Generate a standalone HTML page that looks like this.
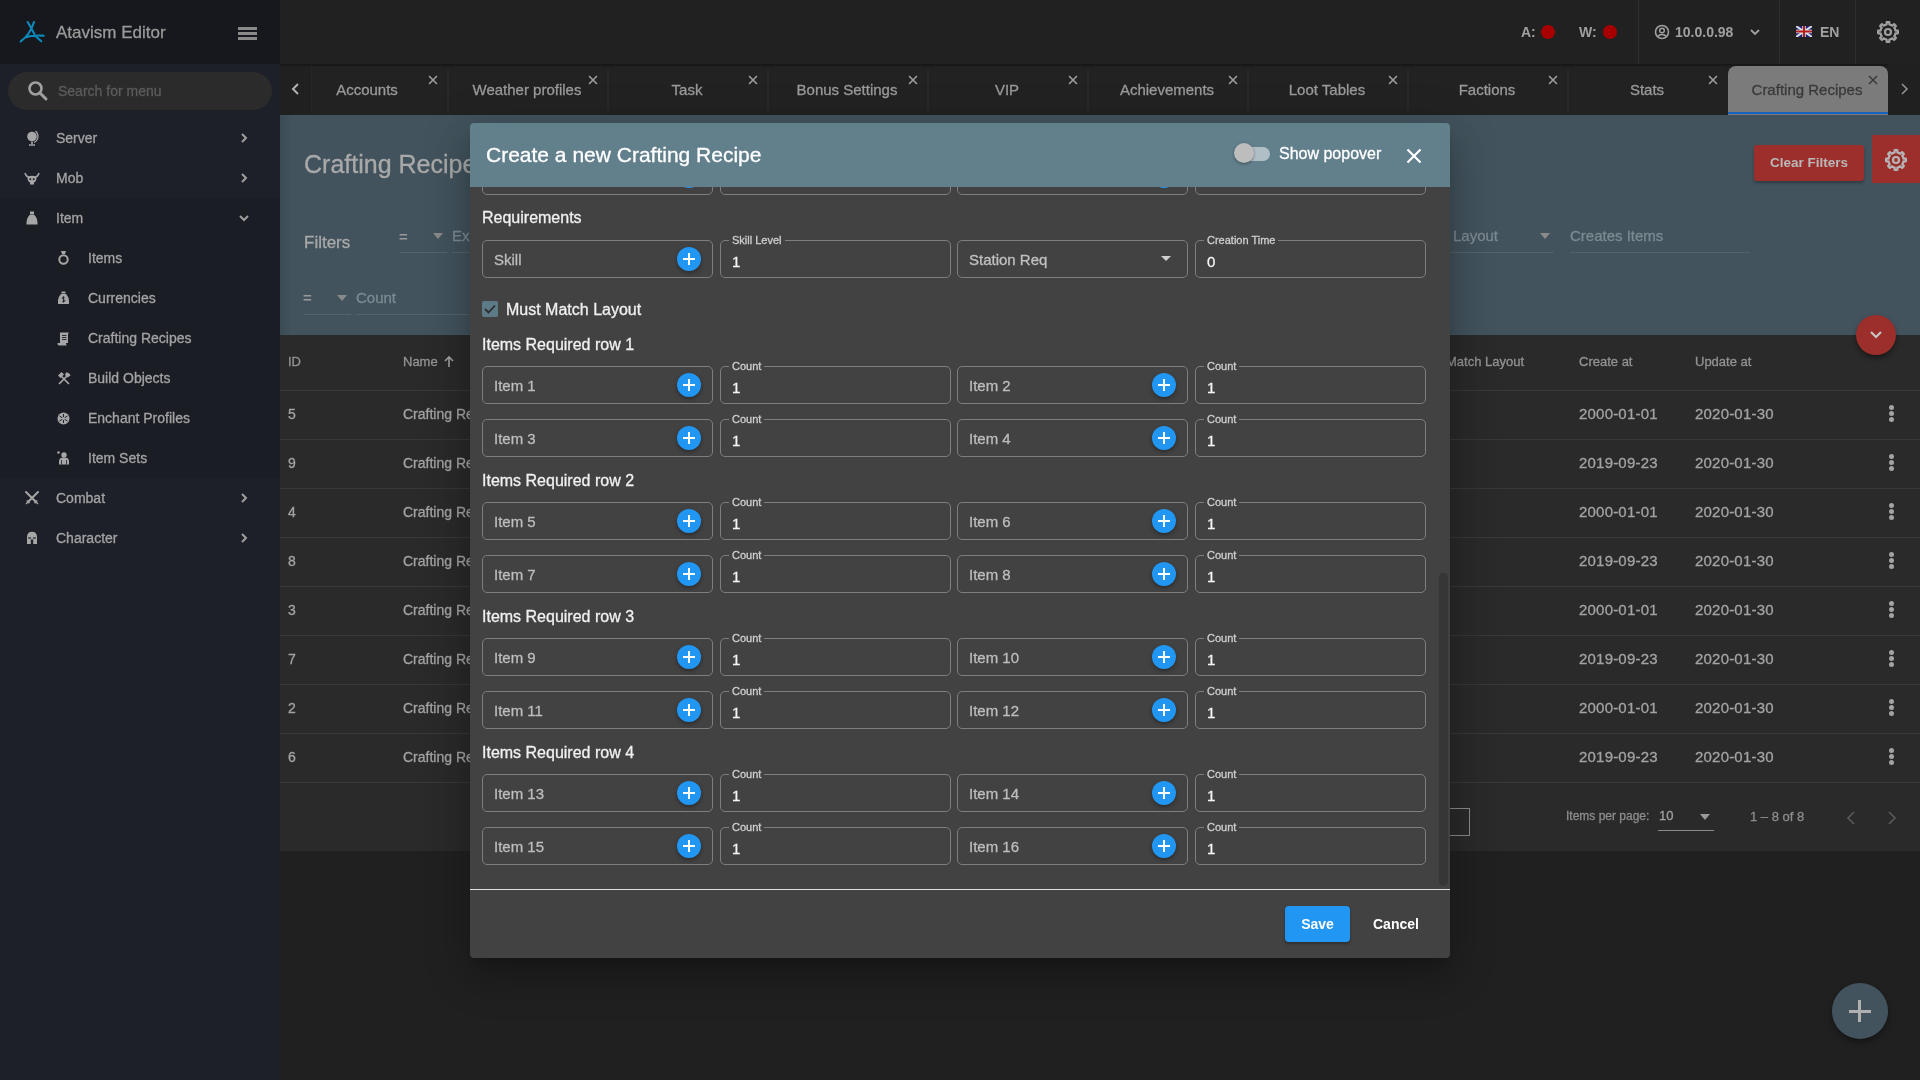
<!DOCTYPE html><html><head><meta charset="utf-8"><style>
*{box-sizing:border-box;margin:0;padding:0}
html,body{width:1920px;height:1080px;overflow:hidden;background:#202020;font-family:"Liberation Sans",sans-serif}
.a{position:absolute}
.t{position:absolute;white-space:nowrap;line-height:1;-webkit-text-stroke:0.3px}
#root{position:absolute;left:0;top:0;width:1920px;height:1080px;will-change:transform}
</style></head><body><div id="root"><div class="a" style="left:0;top:0;width:280px;height:64px;background:#17181d"></div>
<div class="a" style="left:0;top:64px;width:280px;height:1016px;background:#1d2029"></div>
<div class="a" style="left:0;top:198px;width:280px;height:280px;background:#1b1d24"></div>
<svg class="a" style="left:14px;top:14px" width="40" height="36" viewBox="0 0 40 36">
<path d="M13.7 8 L20.3 19.7 M20 8 C17.5 16 13 23 6.7 27.3 M12.3 23.2 C18 21 24 21.5 29.7 21.7 M20.5 21.3 L27.3 27.3" stroke="#0c8abc" stroke-width="2.1" fill="none" stroke-linecap="round"/></svg>
<div class="t" style="left:56px;top:24px;font-size:17px;color:#9a9a9a">Atavism Editor</div>
<div class="a" style="left:238px;top:27px;width:19px;height:3px;background:#8a8a8a"></div>
<div class="a" style="left:238px;top:32px;width:19px;height:3px;background:#8a8a8a"></div>
<div class="a" style="left:238px;top:37px;width:19px;height:3px;background:#8a8a8a"></div>
<div class="a" style="left:8px;top:72px;width:264px;height:38px;border-radius:19px;background:#2b2b2b"></div>
<svg class="a" style="left:27px;top:80px" width="22" height="22" viewBox="0 0 22 22"><circle cx="8.5" cy="8.5" r="6" stroke="#a0a0a0" stroke-width="2.6" fill="none"/><path d="M13 13 L19 19" stroke="#a0a0a0" stroke-width="3" stroke-linecap="round"/></svg>
<div class="t" style="left:58px;top:84px;font-size:14px;color:#5c5c5c">Search for menu</div>
<div class="t" style="left:56px;top:131px;font-size:14px;color:#a3a3a3">Server</div>
<svg class="a" style="left:26px;top:130px" width="14" height="16" viewBox="0 0 14 16"><circle cx="6" cy="6.5" r="4.8" fill="#a6a6a6"/><path d="M9.5 1 C13 4 13 10 8 12.5" stroke="#a6a6a6" stroke-width="1.2" fill="none"/><path d="M6 11.5 V14 M3 15 H9" stroke="#a6a6a6" stroke-width="1.6"/></svg>
<svg class="a" style="left:239px;top:132px" width="10" height="12" viewBox="0 0 10 12"><path d="M3 2 L7 6 L3 10" stroke="#9e9e9e" stroke-width="2" fill="none"/></svg>
<div class="t" style="left:56px;top:171px;font-size:14px;color:#a3a3a3">Mob</div>
<svg class="a" style="left:24px;top:172px" width="16" height="14" viewBox="0 0 16 14"><path d="M1 1 C2 4 4 5 5 5 M15 1 C14 4 12 5 11 5" stroke="#a6a6a6" stroke-width="1.6" fill="none"/><path d="M3.5 6 C3.5 3 12.5 3 12.5 6 C12.5 9 11 10 10 10.5 L10 12.5 L6 12.5 L6 10.5 C5 10 3.5 9 3.5 6Z" fill="#a6a6a6"/><circle cx="6.3" cy="7.2" r="1" fill="#1d2029"/><circle cx="9.7" cy="7.2" r="1" fill="#1d2029"/></svg>
<svg class="a" style="left:239px;top:172px" width="10" height="12" viewBox="0 0 10 12"><path d="M3 2 L7 6 L3 10" stroke="#9e9e9e" stroke-width="2" fill="none"/></svg>
<div class="t" style="left:56px;top:211px;font-size:14px;color:#a3a3a3">Item</div>
<svg class="a" style="left:26px;top:211px" width="12" height="14" viewBox="0 0 12 14"><rect x="4" y="0.5" width="4" height="2.5" fill="#a6a6a6"/><path d="M4 3.5 L8 3.5 C10.5 6 11.5 9 11.5 12 L11.5 13.5 L0.5 13.5 L0.5 12 C0.5 9 1.5 6 4 3.5Z" fill="#a6a6a6"/></svg>
<svg class="a" style="left:238px;top:213px" width="12" height="10" viewBox="0 0 12 10"><path d="M2 3 L6 7 L10 3" stroke="#9e9e9e" stroke-width="2" fill="none"/></svg>
<div class="t" style="left:88px;top:251px;font-size:14px;color:#a3a3a3">Items</div>
<svg class="a" style="left:57px;top:250px" width="13" height="16" viewBox="0 0 13 16"><circle cx="6.5" cy="9.5" r="4.2" stroke="#a6a6a6" stroke-width="2" fill="none"/><path d="M4 1 H9 L8 4 H5Z" fill="#a6a6a6"/></svg>
<div class="t" style="left:88px;top:291px;font-size:14px;color:#a3a3a3">Currencies</div>
<svg class="a" style="left:57px;top:291px" width="13" height="14" viewBox="0 0 13 14"><rect x="4.5" y="0.5" width="4" height="2" fill="#a6a6a6"/><path d="M4 3 L9 3 C11.5 5.5 12 8 12 10.5 L12 13 L1 13 L1 10.5 C1 8 1.5 5.5 4 3Z" fill="#a6a6a6"/><path d="M7.7 6.5 C6.5 5.8 5 6.2 5.2 7.4 C5.4 8.4 8 8.3 8 9.6 C8 10.8 6.3 11 5.2 10.3 M6.5 5.3 V11.5" stroke="#1d2029" stroke-width="0.9" fill="none"/></svg>
<div class="t" style="left:88px;top:331px;font-size:14px;color:#a3a3a3">Crafting Recipes</div>
<svg class="a" style="left:57px;top:332px" width="13" height="14" viewBox="0 0 13 14"><path d="M3 0.5 H12 L11 2 V11 H3Z" fill="#a6a6a6"/><path d="M0.5 11 H9 C9 12 9.5 13.5 10 13.5 H2 C1 13.5 0.5 12.5 0.5 11Z" fill="#a6a6a6"/><path d="M5 3.5 H9.5 M5 5.5 H9.5 M5 7.5 H9.5" stroke="#1d2029" stroke-width="0.9"/></svg>
<div class="t" style="left:88px;top:371px;font-size:14px;color:#a3a3a3">Build Objects</div>
<svg class="a" style="left:57px;top:371px" width="14" height="14" viewBox="0 0 14 14"><path d="M2 13 L11 4 M12 13 L3 4" stroke="#a6a6a6" stroke-width="1.7"/><path d="M1 4.5 L4.5 1 L7 3.5 L3.5 7Z" fill="#a6a6a6"/><path d="M9 1.5 C11 1 13 2.5 13.5 4.5 L10.5 6.5 L8 4Z" fill="#a6a6a6"/></svg>
<div class="t" style="left:88px;top:411px;font-size:14px;color:#a3a3a3">Enchant Profiles</div>
<svg class="a" style="left:57px;top:412px" width="13" height="13" viewBox="0 0 13 13"><circle cx="6.5" cy="6.5" r="6" fill="#a6a6a6"/><path d="M6.5 2 V11 M2.5 4 L10.5 9 M10.5 4 L2.5 9" stroke="#1d2029" stroke-width="1"/><circle cx="6.5" cy="6.5" r="1.6" fill="#a6a6a6"/></svg>
<div class="t" style="left:88px;top:451px;font-size:14px;color:#a3a3a3">Item Sets</div>
<svg class="a" style="left:56px;top:450px" width="15" height="16" viewBox="0 0 15 16"><circle cx="2.5" cy="2.5" r="1.3" fill="#a6a6a6"/><circle cx="8" cy="5" r="2.7" fill="#a6a6a6"/><path d="M3 14.5 V11 C3 8.5 5 7.5 8 7.5 C11 7.5 13 8.5 13 11 V14.5Z" fill="#a6a6a6"/><path d="M5.5 10 V14.5 M10.5 10 V14.5" stroke="#1d2029" stroke-width="0.8"/></svg>
<div class="t" style="left:56px;top:491px;font-size:14px;color:#a3a3a3">Combat</div>
<svg class="a" style="left:24px;top:490px" width="16" height="16" viewBox="0 0 16 16"><path d="M2 2 L12 12 M14 2 L4 12" stroke="#a6a6a6" stroke-width="2" stroke-linecap="round"/><path d="M2 14 L4.5 11.5 M14 14 L11.5 11.5 M2.8 10.5 L5.5 13.2 M13.2 10.5 L10.5 13.2" stroke="#a6a6a6" stroke-width="1.3"/></svg>
<svg class="a" style="left:239px;top:492px" width="10" height="12" viewBox="0 0 10 12"><path d="M3 2 L7 6 L3 10" stroke="#9e9e9e" stroke-width="2" fill="none"/></svg>
<div class="t" style="left:56px;top:531px;font-size:14px;color:#a3a3a3">Character</div>
<svg class="a" style="left:26px;top:531px" width="12" height="14" viewBox="0 0 12 14"><path d="M1 13 V6 C1 2.5 3 0.8 6 0.8 C9 0.8 11 2.5 11 6 V13 H7.2 V8.5 H4.8 V13Z" fill="#a6a6a6"/><path d="M2.3 6.8 L5 7.2 M9.7 6.8 L7 7.2" stroke="#1d2029" stroke-width="1.2"/></svg>
<svg class="a" style="left:239px;top:532px" width="10" height="12" viewBox="0 0 10 12"><path d="M3 2 L7 6 L3 10" stroke="#9e9e9e" stroke-width="2" fill="none"/></svg>
<div class="a" style="left:280px;top:0;width:1640px;height:64px;background:#212121"></div>
<div class="t" style="left:1521px;top:25px;font-size:14px;color:#a0a0a0;font-weight:bold;-webkit-text-stroke:0">A:</div>
<div class="a" style="left:1541px;top:25px;width:14px;height:14px;border-radius:7px;background:#a80000"></div>
<div class="t" style="left:1579px;top:25px;font-size:14px;color:#a0a0a0;font-weight:bold;-webkit-text-stroke:0">W:</div>
<div class="a" style="left:1603px;top:25px;width:14px;height:14px;border-radius:7px;background:#a80000"></div>
<div class="a" style="left:1638px;top:0;width:1px;height:64px;background:#2e2e2e"></div>
<div class="a" style="left:1779px;top:0;width:1px;height:64px;background:#2e2e2e"></div>
<div class="a" style="left:1855px;top:0;width:1px;height:64px;background:#2e2e2e"></div>
<svg class="a" style="left:1654px;top:24px" width="16" height="16" viewBox="0 0 16 16"><circle cx="8" cy="8" r="6.5" stroke="#a0a0a0" stroke-width="1.6" fill="none"/><circle cx="8" cy="6.5" r="2.3" stroke="#a0a0a0" stroke-width="1.5" fill="none"/><path d="M3.8 12.5 C5.5 9.8 10.5 9.8 12.2 12.5" stroke="#a0a0a0" stroke-width="1.5" fill="none"/></svg>
<div class="t" style="left:1675px;top:25px;font-size:14px;color:#a0a0a0;font-weight:bold;-webkit-text-stroke:0">10.0.0.98</div>
<svg class="a" style="left:1749px;top:27px" width="12" height="10" viewBox="0 0 12 10"><path d="M2 3 L6 7 L10 3" stroke="#a0a0a0" stroke-width="1.8" fill="none"/></svg>
<div class="a" style="left:1796px;top:26px;width:16px;height:11px;background:#1a237e"></div>
<svg class="a" style="left:1796px;top:26px" width="16" height="11" viewBox="0 0 16 11"><path d="M0 0 L16 11 M16 0 L0 11" stroke="#ddd" stroke-width="2"/><path d="M8 0 V11 M0 5.5 H16" stroke="#ddd" stroke-width="3.5"/><path d="M8 0 V11 M0 5.5 H16" stroke="#b71c1c" stroke-width="2"/></svg>
<div class="t" style="left:1820px;top:25px;font-size:14px;color:#a0a0a0;font-weight:bold;-webkit-text-stroke:0">EN</div>
<svg class="a" style="left:1876px;top:20px" width="24" height="24" viewBox="0 0 24 24"><path d="M19.08 9.23 L19.48 10.63 L21.91 10.68 L21.91 13.32 L19.48 13.37 L19.08 14.77 L18.96 15.05 L18.26 16.32 L19.94 18.08 L18.08 19.94 L16.32 18.26 L15.05 18.96 L14.77 19.08 L13.37 19.48 L13.32 21.91 L10.68 21.91 L10.63 19.48 L9.23 19.08 L8.95 18.96 L7.68 18.26 L5.92 19.94 L4.06 18.08 L5.74 16.32 L5.04 15.05 L4.92 14.77 L4.52 13.37 L2.09 13.32 L2.09 10.68 L4.52 10.63 L4.92 9.23 L5.04 8.95 L5.74 7.68 L4.06 5.92 L5.92 4.06 L7.68 5.74 L8.95 5.04 L9.23 4.92 L10.63 4.52 L10.68 2.09 L13.32 2.09 L13.37 4.52 L14.77 4.92 L15.05 5.04 L16.32 5.74 L18.08 4.06 L19.94 5.92 L18.26 7.68 L18.96 8.95Z" fill="none" stroke="#a0a0a0" stroke-width="2.2" stroke-linejoin="round"/><circle cx="12" cy="12" r="3" fill="none" stroke="#a0a0a0" stroke-width="2.2"/></svg>
<div class="a" style="left:280px;top:64px;width:1640px;height:51px;background:#202020"></div>
<div class="a" style="left:288px;top:66px;width:160px;height:49px;background:#222222;border-radius:8px 8px 0 0"></div>
<div class="a" style="left:287px;top:68px;width:2px;height:46px;background:#282828;border-radius:1px"></div>
<div class="t" style="left:287px;top:82px;width:160px;text-align:center;font-size:15px;color:#9a9a9a">Accounts</div>
<svg class="a" style="left:428px;top:75px" width="10" height="10" viewBox="0 0 10 10"><path d="M1 1 L9 9 M9 1 L1 9" stroke="#a0a0a0" stroke-width="1.5"/></svg>
<div class="a" style="left:448px;top:66px;width:160px;height:49px;background:#222222;border-radius:8px 8px 0 0"></div>
<div class="a" style="left:447px;top:68px;width:2px;height:46px;background:#282828;border-radius:1px"></div>
<div class="t" style="left:447px;top:82px;width:160px;text-align:center;font-size:15px;color:#9a9a9a">Weather profiles</div>
<svg class="a" style="left:588px;top:75px" width="10" height="10" viewBox="0 0 10 10"><path d="M1 1 L9 9 M9 1 L1 9" stroke="#a0a0a0" stroke-width="1.5"/></svg>
<div class="a" style="left:608px;top:66px;width:160px;height:49px;background:#222222;border-radius:8px 8px 0 0"></div>
<div class="a" style="left:607px;top:68px;width:2px;height:46px;background:#282828;border-radius:1px"></div>
<div class="t" style="left:607px;top:82px;width:160px;text-align:center;font-size:15px;color:#9a9a9a">Task</div>
<svg class="a" style="left:748px;top:75px" width="10" height="10" viewBox="0 0 10 10"><path d="M1 1 L9 9 M9 1 L1 9" stroke="#a0a0a0" stroke-width="1.5"/></svg>
<div class="a" style="left:768px;top:66px;width:160px;height:49px;background:#222222;border-radius:8px 8px 0 0"></div>
<div class="a" style="left:767px;top:68px;width:2px;height:46px;background:#282828;border-radius:1px"></div>
<div class="t" style="left:767px;top:82px;width:160px;text-align:center;font-size:15px;color:#9a9a9a">Bonus Settings</div>
<svg class="a" style="left:908px;top:75px" width="10" height="10" viewBox="0 0 10 10"><path d="M1 1 L9 9 M9 1 L1 9" stroke="#a0a0a0" stroke-width="1.5"/></svg>
<div class="a" style="left:928px;top:66px;width:160px;height:49px;background:#222222;border-radius:8px 8px 0 0"></div>
<div class="a" style="left:927px;top:68px;width:2px;height:46px;background:#282828;border-radius:1px"></div>
<div class="t" style="left:927px;top:82px;width:160px;text-align:center;font-size:15px;color:#9a9a9a">VIP</div>
<svg class="a" style="left:1068px;top:75px" width="10" height="10" viewBox="0 0 10 10"><path d="M1 1 L9 9 M9 1 L1 9" stroke="#a0a0a0" stroke-width="1.5"/></svg>
<div class="a" style="left:1088px;top:66px;width:160px;height:49px;background:#222222;border-radius:8px 8px 0 0"></div>
<div class="a" style="left:1087px;top:68px;width:2px;height:46px;background:#282828;border-radius:1px"></div>
<div class="t" style="left:1087px;top:82px;width:160px;text-align:center;font-size:15px;color:#9a9a9a">Achievements</div>
<svg class="a" style="left:1228px;top:75px" width="10" height="10" viewBox="0 0 10 10"><path d="M1 1 L9 9 M9 1 L1 9" stroke="#a0a0a0" stroke-width="1.5"/></svg>
<div class="a" style="left:1248px;top:66px;width:160px;height:49px;background:#222222;border-radius:8px 8px 0 0"></div>
<div class="a" style="left:1247px;top:68px;width:2px;height:46px;background:#282828;border-radius:1px"></div>
<div class="t" style="left:1247px;top:82px;width:160px;text-align:center;font-size:15px;color:#9a9a9a">Loot Tables</div>
<svg class="a" style="left:1388px;top:75px" width="10" height="10" viewBox="0 0 10 10"><path d="M1 1 L9 9 M9 1 L1 9" stroke="#a0a0a0" stroke-width="1.5"/></svg>
<div class="a" style="left:1408px;top:66px;width:160px;height:49px;background:#222222;border-radius:8px 8px 0 0"></div>
<div class="a" style="left:1407px;top:68px;width:2px;height:46px;background:#282828;border-radius:1px"></div>
<div class="t" style="left:1407px;top:82px;width:160px;text-align:center;font-size:15px;color:#9a9a9a">Factions</div>
<svg class="a" style="left:1548px;top:75px" width="10" height="10" viewBox="0 0 10 10"><path d="M1 1 L9 9 M9 1 L1 9" stroke="#a0a0a0" stroke-width="1.5"/></svg>
<div class="a" style="left:1568px;top:66px;width:160px;height:49px;background:#222222;border-radius:8px 8px 0 0"></div>
<div class="a" style="left:1567px;top:68px;width:2px;height:46px;background:#282828;border-radius:1px"></div>
<div class="t" style="left:1567px;top:82px;width:160px;text-align:center;font-size:15px;color:#9a9a9a">Stats</div>
<svg class="a" style="left:1708px;top:75px" width="10" height="10" viewBox="0 0 10 10"><path d="M1 1 L9 9 M9 1 L1 9" stroke="#a0a0a0" stroke-width="1.5"/></svg>
<div class="a" style="left:1728px;top:66px;width:160px;height:49px;background:#7b7b7b;border-radius:8px 8px 0 0"></div>
<div class="a" style="left:1728px;top:112px;width:160px;height:2px;background:#1565c0"></div>
<div class="t" style="left:1727px;top:82px;width:160px;text-align:center;font-size:15px;color:#3a3a3a">Crafting Recipes</div>
<svg class="a" style="left:1868px;top:75px" width="10" height="10" viewBox="0 0 10 10"><path d="M1 1 L9 9 M9 1 L1 9" stroke="#3a3a3a" stroke-width="1.5"/></svg>
<div class="a" style="left:280px;top:64px;width:32px;height:50px;background:#202020;border-right:1px solid #262626"></div>
<div class="a" style="left:280px;top:64px;width:1640px;height:2px;background:#181818"></div>
<svg class="a" style="left:290px;top:82px" width="12" height="14" viewBox="0 0 12 14"><path d="M8 2 L3 7 L8 12" stroke="#b0b0b0" stroke-width="2" fill="none"/></svg>
<div class="a" style="left:1888px;top:64px;width:32px;height:50px;background:#202020"></div>
<svg class="a" style="left:1898px;top:82px" width="12" height="14" viewBox="0 0 12 14"><path d="M4 2 L9 7 L4 12" stroke="#909090" stroke-width="1.6" fill="none"/></svg>
<div class="a" style="left:280px;top:115px;width:1640px;height:220px;background:#42535d"></div>
<div class="a" style="left:280px;top:115px;width:12px;height:220px;background:linear-gradient(90deg,rgba(0,0,0,.1),rgba(0,0,0,0))"></div>
<div class="t" style="left:304px;top:152px;font-size:25px;color:#a9a9a9">Crafting Recipes</div>
<div class="t" style="left:304px;top:234px;font-size:17px;color:#a9a9a9">Filters</div>
<div class="t" style="left:399px;top:229px;font-size:15px;color:#9a9a9a;font-weight:bold;-webkit-text-stroke:0">=</div>
<div class="a" style="left:400px;top:252px;width:47px;height:1px;background:#53636c"></div>
<svg class="a" style="left:432px;top:232px" width="12" height="8"><path d="M1 1 L11 1 L6 7Z" fill="#8a8a8a"/></svg>
<div class="t" style="left:452px;top:228px;font-size:15px;color:#7c8a92">Exp</div>
<div class="a" style="left:452px;top:252px;width:30px;height:1px;background:#53636c"></div>
<div class="t" style="left:303px;top:290px;font-size:15px;color:#9a9a9a;font-weight:bold;-webkit-text-stroke:0">=</div>
<div class="a" style="left:304px;top:314px;width:47px;height:1px;background:#53636c"></div>
<svg class="a" style="left:336px;top:294px" width="12" height="8"><path d="M1 1 L11 1 L6 7Z" fill="#8a8a8a"/></svg>
<div class="t" style="left:356px;top:290px;font-size:15px;color:#7c8a92">Count</div>
<div class="a" style="left:356px;top:314px;width:120px;height:1px;background:#53636c"></div>
<div class="t" style="left:1453px;top:228px;font-size:15px;color:#7c8a92">Layout</div>
<svg class="a" style="left:1539px;top:232px" width="12" height="8"><path d="M1 1 L11 1 L6 7Z" fill="#8a8a8a"/></svg>
<div class="a" style="left:1450px;top:252px;width:104px;height:1px;background:#53636c"></div>
<div class="t" style="left:1570px;top:228px;font-size:15px;color:#7c8a92">Creates Items</div>
<div class="a" style="left:1570px;top:252px;width:180px;height:1px;background:#53636c"></div>
<div class="a" style="left:1754px;top:145px;width:110px;height:36px;border-radius:3px;background:#9c2f2b;box-shadow:0 2px 3px rgba(0,0,0,.3)"></div>
<div class="t" style="left:1754px;top:156px;width:110px;text-align:center;font-size:13.5px;color:#b9b9b9;font-weight:bold;-webkit-text-stroke:0">Clear Filters</div>
<div class="a" style="left:1872px;top:135px;width:48px;height:48px;background:#9c2f2b"></div>
<svg class="a" style="left:1884px;top:148px" width="24" height="24" viewBox="0 0 24 24"><path d="M19.08 9.23 L19.48 10.63 L21.91 10.68 L21.91 13.32 L19.48 13.37 L19.08 14.77 L18.96 15.05 L18.26 16.32 L19.94 18.08 L18.08 19.94 L16.32 18.26 L15.05 18.96 L14.77 19.08 L13.37 19.48 L13.32 21.91 L10.68 21.91 L10.63 19.48 L9.23 19.08 L8.95 18.96 L7.68 18.26 L5.92 19.94 L4.06 18.08 L5.74 16.32 L5.04 15.05 L4.92 14.77 L4.52 13.37 L2.09 13.32 L2.09 10.68 L4.52 10.63 L4.92 9.23 L5.04 8.95 L5.74 7.68 L4.06 5.92 L5.92 4.06 L7.68 5.74 L8.95 5.04 L9.23 4.92 L10.63 4.52 L10.68 2.09 L13.32 2.09 L13.37 4.52 L14.77 4.92 L15.05 5.04 L16.32 5.74 L18.08 4.06 L19.94 5.92 L18.26 7.68 L18.96 8.95Z" fill="none" stroke="#b5b5b5" stroke-width="2.2" stroke-linejoin="round"/><circle cx="12" cy="12" r="3" fill="none" stroke="#b5b5b5" stroke-width="2.2"/></svg>
<div class="a" style="left:280px;top:335px;width:1640px;height:516px;background:#2a2a2a"></div>
<div class="t" style="left:288px;top:355px;font-size:13px;color:#939393">ID</div>
<div class="t" style="left:403px;top:355px;font-size:13px;color:#939393">Name</div>
<svg class="a" style="left:443px;top:355px" width="12" height="13" viewBox="0 0 12 13"><path d="M6 12 V2 M2 6 L6 2 L10 6" stroke="#a0a0a0" stroke-width="1.6" fill="none"/></svg>
<div class="t" style="left:1446px;top:355px;font-size:13px;color:#939393">Match Layout</div>
<div class="t" style="left:1579px;top:355px;font-size:13px;color:#939393">Create at</div>
<div class="t" style="left:1695px;top:355px;font-size:13px;color:#939393">Update at</div>
<div class="a" style="left:280px;top:390px;width:1640px;height:1px;background:#383838"></div>
<div class="t" style="left:288px;top:407px;font-size:14px;color:#a3a3a3">5</div>
<div class="t" style="left:403px;top:407px;font-size:14px;color:#a3a3a3">Crafting Recipe</div>
<div class="t" style="left:1579px;top:406px;font-size:15px;letter-spacing:.2px;color:#a3a3a3">2000-01-01</div>
<div class="t" style="left:1695px;top:406px;font-size:15px;letter-spacing:.2px;color:#a3a3a3">2020-01-30</div>
<div class="a" style="left:1889px;top:405px;width:4.5px;height:4.5px;border-radius:3px;background:#a3a3a3"></div>
<div class="a" style="left:1889px;top:411px;width:4.5px;height:4.5px;border-radius:3px;background:#a3a3a3"></div>
<div class="a" style="left:1889px;top:417px;width:4.5px;height:4.5px;border-radius:3px;background:#a3a3a3"></div>
<div class="a" style="left:280px;top:439px;width:1640px;height:1px;background:#383838"></div>
<div class="t" style="left:288px;top:456px;font-size:14px;color:#a3a3a3">9</div>
<div class="t" style="left:403px;top:456px;font-size:14px;color:#a3a3a3">Crafting Recipe</div>
<div class="t" style="left:1579px;top:455px;font-size:15px;letter-spacing:.2px;color:#a3a3a3">2019-09-23</div>
<div class="t" style="left:1695px;top:455px;font-size:15px;letter-spacing:.2px;color:#a3a3a3">2020-01-30</div>
<div class="a" style="left:1889px;top:454px;width:4.5px;height:4.5px;border-radius:3px;background:#a3a3a3"></div>
<div class="a" style="left:1889px;top:460px;width:4.5px;height:4.5px;border-radius:3px;background:#a3a3a3"></div>
<div class="a" style="left:1889px;top:466px;width:4.5px;height:4.5px;border-radius:3px;background:#a3a3a3"></div>
<div class="a" style="left:280px;top:488px;width:1640px;height:1px;background:#383838"></div>
<div class="t" style="left:288px;top:505px;font-size:14px;color:#a3a3a3">4</div>
<div class="t" style="left:403px;top:505px;font-size:14px;color:#a3a3a3">Crafting Recipe</div>
<div class="t" style="left:1579px;top:504px;font-size:15px;letter-spacing:.2px;color:#a3a3a3">2000-01-01</div>
<div class="t" style="left:1695px;top:504px;font-size:15px;letter-spacing:.2px;color:#a3a3a3">2020-01-30</div>
<div class="a" style="left:1889px;top:503px;width:4.5px;height:4.5px;border-radius:3px;background:#a3a3a3"></div>
<div class="a" style="left:1889px;top:509px;width:4.5px;height:4.5px;border-radius:3px;background:#a3a3a3"></div>
<div class="a" style="left:1889px;top:515px;width:4.5px;height:4.5px;border-radius:3px;background:#a3a3a3"></div>
<div class="a" style="left:280px;top:537px;width:1640px;height:1px;background:#383838"></div>
<div class="t" style="left:288px;top:554px;font-size:14px;color:#a3a3a3">8</div>
<div class="t" style="left:403px;top:554px;font-size:14px;color:#a3a3a3">Crafting Recipe</div>
<div class="t" style="left:1579px;top:553px;font-size:15px;letter-spacing:.2px;color:#a3a3a3">2019-09-23</div>
<div class="t" style="left:1695px;top:553px;font-size:15px;letter-spacing:.2px;color:#a3a3a3">2020-01-30</div>
<div class="a" style="left:1889px;top:552px;width:4.5px;height:4.5px;border-radius:3px;background:#a3a3a3"></div>
<div class="a" style="left:1889px;top:558px;width:4.5px;height:4.5px;border-radius:3px;background:#a3a3a3"></div>
<div class="a" style="left:1889px;top:564px;width:4.5px;height:4.5px;border-radius:3px;background:#a3a3a3"></div>
<div class="a" style="left:280px;top:586px;width:1640px;height:1px;background:#383838"></div>
<div class="t" style="left:288px;top:603px;font-size:14px;color:#a3a3a3">3</div>
<div class="t" style="left:403px;top:603px;font-size:14px;color:#a3a3a3">Crafting Recipe</div>
<div class="t" style="left:1579px;top:602px;font-size:15px;letter-spacing:.2px;color:#a3a3a3">2000-01-01</div>
<div class="t" style="left:1695px;top:602px;font-size:15px;letter-spacing:.2px;color:#a3a3a3">2020-01-30</div>
<div class="a" style="left:1889px;top:601px;width:4.5px;height:4.5px;border-radius:3px;background:#a3a3a3"></div>
<div class="a" style="left:1889px;top:607px;width:4.5px;height:4.5px;border-radius:3px;background:#a3a3a3"></div>
<div class="a" style="left:1889px;top:613px;width:4.5px;height:4.5px;border-radius:3px;background:#a3a3a3"></div>
<div class="a" style="left:280px;top:635px;width:1640px;height:1px;background:#383838"></div>
<div class="t" style="left:288px;top:652px;font-size:14px;color:#a3a3a3">7</div>
<div class="t" style="left:403px;top:652px;font-size:14px;color:#a3a3a3">Crafting Recipe</div>
<div class="t" style="left:1579px;top:651px;font-size:15px;letter-spacing:.2px;color:#a3a3a3">2019-09-23</div>
<div class="t" style="left:1695px;top:651px;font-size:15px;letter-spacing:.2px;color:#a3a3a3">2020-01-30</div>
<div class="a" style="left:1889px;top:650px;width:4.5px;height:4.5px;border-radius:3px;background:#a3a3a3"></div>
<div class="a" style="left:1889px;top:656px;width:4.5px;height:4.5px;border-radius:3px;background:#a3a3a3"></div>
<div class="a" style="left:1889px;top:662px;width:4.5px;height:4.5px;border-radius:3px;background:#a3a3a3"></div>
<div class="a" style="left:280px;top:684px;width:1640px;height:1px;background:#383838"></div>
<div class="t" style="left:288px;top:701px;font-size:14px;color:#a3a3a3">2</div>
<div class="t" style="left:403px;top:701px;font-size:14px;color:#a3a3a3">Crafting Recipe</div>
<div class="t" style="left:1579px;top:700px;font-size:15px;letter-spacing:.2px;color:#a3a3a3">2000-01-01</div>
<div class="t" style="left:1695px;top:700px;font-size:15px;letter-spacing:.2px;color:#a3a3a3">2020-01-30</div>
<div class="a" style="left:1889px;top:699px;width:4.5px;height:4.5px;border-radius:3px;background:#a3a3a3"></div>
<div class="a" style="left:1889px;top:705px;width:4.5px;height:4.5px;border-radius:3px;background:#a3a3a3"></div>
<div class="a" style="left:1889px;top:711px;width:4.5px;height:4.5px;border-radius:3px;background:#a3a3a3"></div>
<div class="a" style="left:280px;top:733px;width:1640px;height:1px;background:#383838"></div>
<div class="t" style="left:288px;top:750px;font-size:14px;color:#a3a3a3">6</div>
<div class="t" style="left:403px;top:750px;font-size:14px;color:#a3a3a3">Crafting Recipe</div>
<div class="t" style="left:1579px;top:749px;font-size:15px;letter-spacing:.2px;color:#a3a3a3">2019-09-23</div>
<div class="t" style="left:1695px;top:749px;font-size:15px;letter-spacing:.2px;color:#a3a3a3">2020-01-30</div>
<div class="a" style="left:1889px;top:748px;width:4.5px;height:4.5px;border-radius:3px;background:#a3a3a3"></div>
<div class="a" style="left:1889px;top:754px;width:4.5px;height:4.5px;border-radius:3px;background:#a3a3a3"></div>
<div class="a" style="left:1889px;top:760px;width:4.5px;height:4.5px;border-radius:3px;background:#a3a3a3"></div>
<div class="a" style="left:280px;top:782px;width:1640px;height:1px;background:#383838"></div>
<div class="t" style="left:1566px;top:810px;font-size:12px;color:#8c8c8c">Items per page:</div>
<div class="t" style="left:1659px;top:809px;font-size:13px;color:#a0a0a0">10</div>
<svg class="a" style="left:1699px;top:813px" width="12" height="8"><path d="M1 1 L11 1 L6 7Z" fill="#9a9a9a"/></svg>
<div class="a" style="left:1658px;top:830px;width:56px;height:1px;background:#8a8a8a"></div>
<div class="t" style="left:1750px;top:810px;font-size:13px;color:#8c8c8c">1 – 8 of 8</div>
<svg class="a" style="left:1845px;top:810px" width="12" height="16" viewBox="0 0 12 16"><path d="M9 2 L3 8 L9 14" stroke="#5a5a5a" stroke-width="1.6" fill="none"/></svg>
<svg class="a" style="left:1886px;top:810px" width="12" height="16" viewBox="0 0 12 16"><path d="M3 2 L9 8 L3 14" stroke="#5a5a5a" stroke-width="1.6" fill="none"/></svg>
<div class="a" style="left:1440px;top:808px;width:30px;height:28px;border:1px solid #8a8a8a"></div>
<div class="a" style="left:1856px;top:315px;width:40px;height:40px;border-radius:20px;background:#9c2f2b;box-shadow:0 3px 5px rgba(0,0,0,.4)"></div>
<svg class="a" style="left:1869px;top:330px" width="14" height="10" viewBox="0 0 14 10"><path d="M2 2 L7 7 L12 2" stroke="#c9c9c9" stroke-width="2" fill="none"/></svg>
<div class="a" style="left:1832px;top:983px;width:56px;height:56px;border-radius:28px;background:#42535d;box-shadow:0 3px 6px rgba(0,0,0,.4)"></div>
<div class="a" style="left:1849px;top:1010px;width:22px;height:3px;background:#b0b0b0"></div>
<div class="a" style="left:1858px;top:1000px;width:3px;height:22px;background:#b0b0b0"></div>
<div class="a" style="left:470px;top:123px;width:980px;height:835px;border-radius:4px;background:#424242;box-shadow:0 11px 15px -7px rgba(0,0,0,.2),0 24px 38px 3px rgba(0,0,0,.14),0 9px 46px 8px rgba(0,0,0,.12);overflow:hidden">
<div class="a" style="left:12px;top:34px;width:231px;height:38px;border:1px solid #7e7e7e;border-radius:5px"></div><div class="a" style="left:250px;top:34px;width:231px;height:38px;border:1px solid #7e7e7e;border-radius:5px"></div><div class="a" style="left:487px;top:34px;width:231px;height:38px;border:1px solid #7e7e7e;border-radius:5px"></div><div class="a" style="left:725px;top:34px;width:231px;height:38px;border:1px solid #7e7e7e;border-radius:5px"></div><div class="a" style="left:207px;top:41px;width:24px;height:24px;border-radius:12px;background:#2196f3"></div><div class="a" style="left:682px;top:41px;width:24px;height:24px;border-radius:12px;background:#2196f3"></div><div class="t" style="left:12px;top:87px;font-size:16px;color:#f0f0f0">Requirements</div><div class="a" style="left:12px;top:117px;width:231px;height:38px;border:1px solid #7e7e7e;border-radius:5px"></div><div class="t" style="left:24px;top:129px;font-size:15px;color:#bdbdbd">Skill</div><div class="a" style="left:207px;top:124px;width:24px;height:24px;border-radius:12px;background:#2196f3;box-shadow:0 2px 4px rgba(0,0,0,.35)"></div><div class="a" style="left:213px;top:135px;width:12px;height:2px;background:#fff"></div><div class="a" style="left:218px;top:130px;width:2px;height:12px;background:#fff"></div><div class="a" style="left:250px;top:117px;width:231px;height:38px;border:1px solid #7e7e7e;border-radius:5px"></div><div class="t" style="left:259px;top:112px;padding:0 3px;font-size:11px;color:#cfcfcf;background:#424242">Skill Level</div><div class="t" style="left:262px;top:131px;font-size:15px;color:#f5f5f5">1</div><div class="a" style="left:487px;top:117px;width:231px;height:38px;border:1px solid #7e7e7e;border-radius:5px"></div><div class="t" style="left:499px;top:129px;font-size:15px;color:#c0c0c0">Station Req</div><svg class="a" style="left:691px;top:133px" width="10" height="6"><path d="M0 0 L10 0 L5 5Z" fill="#cfcfcf"/></svg><div class="a" style="left:725px;top:117px;width:231px;height:38px;border:1px solid #7e7e7e;border-radius:5px"></div><div class="t" style="left:734px;top:112px;padding:0 3px;font-size:11px;color:#cfcfcf;background:#424242">Creation Time</div><div class="t" style="left:737px;top:131px;font-size:15px;color:#f5f5f5">0</div><div class="a" style="left:12px;top:178px;width:16px;height:16px;border-radius:2px;background:#5d7a87"></div><svg class="a" style="left:12px;top:178px" width="16" height="16" viewBox="0 0 16 16"><path d="M3 8 L6.5 11.5 L13 4.5" stroke="#2e2e2e" stroke-width="1.8" fill="none"/></svg><div class="t" style="left:36px;top:179px;font-size:16px;color:#f0f0f0">Must Match Layout</div><div class="t" style="left:12px;top:214px;font-size:16px;color:#f0f0f0">Items Required row 1</div><div class="a" style="left:12px;top:243px;width:231px;height:38px;border:1px solid #7e7e7e;border-radius:5px"></div><div class="t" style="left:24px;top:255px;font-size:15px;color:#bdbdbd">Item 1</div><div class="a" style="left:207px;top:250px;width:24px;height:24px;border-radius:12px;background:#2196f3;box-shadow:0 2px 4px rgba(0,0,0,.35)"></div><div class="a" style="left:213px;top:261px;width:12px;height:2px;background:#fff"></div><div class="a" style="left:218px;top:256px;width:2px;height:12px;background:#fff"></div><div class="a" style="left:250px;top:243px;width:231px;height:38px;border:1px solid #7e7e7e;border-radius:5px"></div><div class="t" style="left:259px;top:238px;padding:0 3px;font-size:11px;color:#cfcfcf;background:#424242">Count</div><div class="t" style="left:262px;top:257px;font-size:15px;color:#f5f5f5">1</div><div class="a" style="left:487px;top:243px;width:231px;height:38px;border:1px solid #7e7e7e;border-radius:5px"></div><div class="t" style="left:499px;top:255px;font-size:15px;color:#bdbdbd">Item 2</div><div class="a" style="left:682px;top:250px;width:24px;height:24px;border-radius:12px;background:#2196f3;box-shadow:0 2px 4px rgba(0,0,0,.35)"></div><div class="a" style="left:688px;top:261px;width:12px;height:2px;background:#fff"></div><div class="a" style="left:693px;top:256px;width:2px;height:12px;background:#fff"></div><div class="a" style="left:725px;top:243px;width:231px;height:38px;border:1px solid #7e7e7e;border-radius:5px"></div><div class="t" style="left:734px;top:238px;padding:0 3px;font-size:11px;color:#cfcfcf;background:#424242">Count</div><div class="t" style="left:737px;top:257px;font-size:15px;color:#f5f5f5">1</div><div class="a" style="left:12px;top:296px;width:231px;height:38px;border:1px solid #7e7e7e;border-radius:5px"></div><div class="t" style="left:24px;top:308px;font-size:15px;color:#bdbdbd">Item 3</div><div class="a" style="left:207px;top:303px;width:24px;height:24px;border-radius:12px;background:#2196f3;box-shadow:0 2px 4px rgba(0,0,0,.35)"></div><div class="a" style="left:213px;top:314px;width:12px;height:2px;background:#fff"></div><div class="a" style="left:218px;top:309px;width:2px;height:12px;background:#fff"></div><div class="a" style="left:250px;top:296px;width:231px;height:38px;border:1px solid #7e7e7e;border-radius:5px"></div><div class="t" style="left:259px;top:291px;padding:0 3px;font-size:11px;color:#cfcfcf;background:#424242">Count</div><div class="t" style="left:262px;top:310px;font-size:15px;color:#f5f5f5">1</div><div class="a" style="left:487px;top:296px;width:231px;height:38px;border:1px solid #7e7e7e;border-radius:5px"></div><div class="t" style="left:499px;top:308px;font-size:15px;color:#bdbdbd">Item 4</div><div class="a" style="left:682px;top:303px;width:24px;height:24px;border-radius:12px;background:#2196f3;box-shadow:0 2px 4px rgba(0,0,0,.35)"></div><div class="a" style="left:688px;top:314px;width:12px;height:2px;background:#fff"></div><div class="a" style="left:693px;top:309px;width:2px;height:12px;background:#fff"></div><div class="a" style="left:725px;top:296px;width:231px;height:38px;border:1px solid #7e7e7e;border-radius:5px"></div><div class="t" style="left:734px;top:291px;padding:0 3px;font-size:11px;color:#cfcfcf;background:#424242">Count</div><div class="t" style="left:737px;top:310px;font-size:15px;color:#f5f5f5">1</div><div class="t" style="left:12px;top:350px;font-size:16px;color:#f0f0f0">Items Required row 2</div><div class="a" style="left:12px;top:379px;width:231px;height:38px;border:1px solid #7e7e7e;border-radius:5px"></div><div class="t" style="left:24px;top:391px;font-size:15px;color:#bdbdbd">Item 5</div><div class="a" style="left:207px;top:386px;width:24px;height:24px;border-radius:12px;background:#2196f3;box-shadow:0 2px 4px rgba(0,0,0,.35)"></div><div class="a" style="left:213px;top:397px;width:12px;height:2px;background:#fff"></div><div class="a" style="left:218px;top:392px;width:2px;height:12px;background:#fff"></div><div class="a" style="left:250px;top:379px;width:231px;height:38px;border:1px solid #7e7e7e;border-radius:5px"></div><div class="t" style="left:259px;top:374px;padding:0 3px;font-size:11px;color:#cfcfcf;background:#424242">Count</div><div class="t" style="left:262px;top:393px;font-size:15px;color:#f5f5f5">1</div><div class="a" style="left:487px;top:379px;width:231px;height:38px;border:1px solid #7e7e7e;border-radius:5px"></div><div class="t" style="left:499px;top:391px;font-size:15px;color:#bdbdbd">Item 6</div><div class="a" style="left:682px;top:386px;width:24px;height:24px;border-radius:12px;background:#2196f3;box-shadow:0 2px 4px rgba(0,0,0,.35)"></div><div class="a" style="left:688px;top:397px;width:12px;height:2px;background:#fff"></div><div class="a" style="left:693px;top:392px;width:2px;height:12px;background:#fff"></div><div class="a" style="left:725px;top:379px;width:231px;height:38px;border:1px solid #7e7e7e;border-radius:5px"></div><div class="t" style="left:734px;top:374px;padding:0 3px;font-size:11px;color:#cfcfcf;background:#424242">Count</div><div class="t" style="left:737px;top:393px;font-size:15px;color:#f5f5f5">1</div><div class="a" style="left:12px;top:432px;width:231px;height:38px;border:1px solid #7e7e7e;border-radius:5px"></div><div class="t" style="left:24px;top:444px;font-size:15px;color:#bdbdbd">Item 7</div><div class="a" style="left:207px;top:439px;width:24px;height:24px;border-radius:12px;background:#2196f3;box-shadow:0 2px 4px rgba(0,0,0,.35)"></div><div class="a" style="left:213px;top:450px;width:12px;height:2px;background:#fff"></div><div class="a" style="left:218px;top:445px;width:2px;height:12px;background:#fff"></div><div class="a" style="left:250px;top:432px;width:231px;height:38px;border:1px solid #7e7e7e;border-radius:5px"></div><div class="t" style="left:259px;top:427px;padding:0 3px;font-size:11px;color:#cfcfcf;background:#424242">Count</div><div class="t" style="left:262px;top:446px;font-size:15px;color:#f5f5f5">1</div><div class="a" style="left:487px;top:432px;width:231px;height:38px;border:1px solid #7e7e7e;border-radius:5px"></div><div class="t" style="left:499px;top:444px;font-size:15px;color:#bdbdbd">Item 8</div><div class="a" style="left:682px;top:439px;width:24px;height:24px;border-radius:12px;background:#2196f3;box-shadow:0 2px 4px rgba(0,0,0,.35)"></div><div class="a" style="left:688px;top:450px;width:12px;height:2px;background:#fff"></div><div class="a" style="left:693px;top:445px;width:2px;height:12px;background:#fff"></div><div class="a" style="left:725px;top:432px;width:231px;height:38px;border:1px solid #7e7e7e;border-radius:5px"></div><div class="t" style="left:734px;top:427px;padding:0 3px;font-size:11px;color:#cfcfcf;background:#424242">Count</div><div class="t" style="left:737px;top:446px;font-size:15px;color:#f5f5f5">1</div><div class="t" style="left:12px;top:486px;font-size:16px;color:#f0f0f0">Items Required row 3</div><div class="a" style="left:12px;top:515px;width:231px;height:38px;border:1px solid #7e7e7e;border-radius:5px"></div><div class="t" style="left:24px;top:527px;font-size:15px;color:#bdbdbd">Item 9</div><div class="a" style="left:207px;top:522px;width:24px;height:24px;border-radius:12px;background:#2196f3;box-shadow:0 2px 4px rgba(0,0,0,.35)"></div><div class="a" style="left:213px;top:533px;width:12px;height:2px;background:#fff"></div><div class="a" style="left:218px;top:528px;width:2px;height:12px;background:#fff"></div><div class="a" style="left:250px;top:515px;width:231px;height:38px;border:1px solid #7e7e7e;border-radius:5px"></div><div class="t" style="left:259px;top:510px;padding:0 3px;font-size:11px;color:#cfcfcf;background:#424242">Count</div><div class="t" style="left:262px;top:529px;font-size:15px;color:#f5f5f5">1</div><div class="a" style="left:487px;top:515px;width:231px;height:38px;border:1px solid #7e7e7e;border-radius:5px"></div><div class="t" style="left:499px;top:527px;font-size:15px;color:#bdbdbd">Item 10</div><div class="a" style="left:682px;top:522px;width:24px;height:24px;border-radius:12px;background:#2196f3;box-shadow:0 2px 4px rgba(0,0,0,.35)"></div><div class="a" style="left:688px;top:533px;width:12px;height:2px;background:#fff"></div><div class="a" style="left:693px;top:528px;width:2px;height:12px;background:#fff"></div><div class="a" style="left:725px;top:515px;width:231px;height:38px;border:1px solid #7e7e7e;border-radius:5px"></div><div class="t" style="left:734px;top:510px;padding:0 3px;font-size:11px;color:#cfcfcf;background:#424242">Count</div><div class="t" style="left:737px;top:529px;font-size:15px;color:#f5f5f5">1</div><div class="a" style="left:12px;top:568px;width:231px;height:38px;border:1px solid #7e7e7e;border-radius:5px"></div><div class="t" style="left:24px;top:580px;font-size:15px;color:#bdbdbd">Item 11</div><div class="a" style="left:207px;top:575px;width:24px;height:24px;border-radius:12px;background:#2196f3;box-shadow:0 2px 4px rgba(0,0,0,.35)"></div><div class="a" style="left:213px;top:586px;width:12px;height:2px;background:#fff"></div><div class="a" style="left:218px;top:581px;width:2px;height:12px;background:#fff"></div><div class="a" style="left:250px;top:568px;width:231px;height:38px;border:1px solid #7e7e7e;border-radius:5px"></div><div class="t" style="left:259px;top:563px;padding:0 3px;font-size:11px;color:#cfcfcf;background:#424242">Count</div><div class="t" style="left:262px;top:582px;font-size:15px;color:#f5f5f5">1</div><div class="a" style="left:487px;top:568px;width:231px;height:38px;border:1px solid #7e7e7e;border-radius:5px"></div><div class="t" style="left:499px;top:580px;font-size:15px;color:#bdbdbd">Item 12</div><div class="a" style="left:682px;top:575px;width:24px;height:24px;border-radius:12px;background:#2196f3;box-shadow:0 2px 4px rgba(0,0,0,.35)"></div><div class="a" style="left:688px;top:586px;width:12px;height:2px;background:#fff"></div><div class="a" style="left:693px;top:581px;width:2px;height:12px;background:#fff"></div><div class="a" style="left:725px;top:568px;width:231px;height:38px;border:1px solid #7e7e7e;border-radius:5px"></div><div class="t" style="left:734px;top:563px;padding:0 3px;font-size:11px;color:#cfcfcf;background:#424242">Count</div><div class="t" style="left:737px;top:582px;font-size:15px;color:#f5f5f5">1</div><div class="t" style="left:12px;top:622px;font-size:16px;color:#f0f0f0">Items Required row 4</div><div class="a" style="left:12px;top:651px;width:231px;height:38px;border:1px solid #7e7e7e;border-radius:5px"></div><div class="t" style="left:24px;top:663px;font-size:15px;color:#bdbdbd">Item 13</div><div class="a" style="left:207px;top:658px;width:24px;height:24px;border-radius:12px;background:#2196f3;box-shadow:0 2px 4px rgba(0,0,0,.35)"></div><div class="a" style="left:213px;top:669px;width:12px;height:2px;background:#fff"></div><div class="a" style="left:218px;top:664px;width:2px;height:12px;background:#fff"></div><div class="a" style="left:250px;top:651px;width:231px;height:38px;border:1px solid #7e7e7e;border-radius:5px"></div><div class="t" style="left:259px;top:646px;padding:0 3px;font-size:11px;color:#cfcfcf;background:#424242">Count</div><div class="t" style="left:262px;top:665px;font-size:15px;color:#f5f5f5">1</div><div class="a" style="left:487px;top:651px;width:231px;height:38px;border:1px solid #7e7e7e;border-radius:5px"></div><div class="t" style="left:499px;top:663px;font-size:15px;color:#bdbdbd">Item 14</div><div class="a" style="left:682px;top:658px;width:24px;height:24px;border-radius:12px;background:#2196f3;box-shadow:0 2px 4px rgba(0,0,0,.35)"></div><div class="a" style="left:688px;top:669px;width:12px;height:2px;background:#fff"></div><div class="a" style="left:693px;top:664px;width:2px;height:12px;background:#fff"></div><div class="a" style="left:725px;top:651px;width:231px;height:38px;border:1px solid #7e7e7e;border-radius:5px"></div><div class="t" style="left:734px;top:646px;padding:0 3px;font-size:11px;color:#cfcfcf;background:#424242">Count</div><div class="t" style="left:737px;top:665px;font-size:15px;color:#f5f5f5">1</div><div class="a" style="left:12px;top:704px;width:231px;height:38px;border:1px solid #7e7e7e;border-radius:5px"></div><div class="t" style="left:24px;top:716px;font-size:15px;color:#bdbdbd">Item 15</div><div class="a" style="left:207px;top:711px;width:24px;height:24px;border-radius:12px;background:#2196f3;box-shadow:0 2px 4px rgba(0,0,0,.35)"></div><div class="a" style="left:213px;top:722px;width:12px;height:2px;background:#fff"></div><div class="a" style="left:218px;top:717px;width:2px;height:12px;background:#fff"></div><div class="a" style="left:250px;top:704px;width:231px;height:38px;border:1px solid #7e7e7e;border-radius:5px"></div><div class="t" style="left:259px;top:699px;padding:0 3px;font-size:11px;color:#cfcfcf;background:#424242">Count</div><div class="t" style="left:262px;top:718px;font-size:15px;color:#f5f5f5">1</div><div class="a" style="left:487px;top:704px;width:231px;height:38px;border:1px solid #7e7e7e;border-radius:5px"></div><div class="t" style="left:499px;top:716px;font-size:15px;color:#bdbdbd">Item 16</div><div class="a" style="left:682px;top:711px;width:24px;height:24px;border-radius:12px;background:#2196f3;box-shadow:0 2px 4px rgba(0,0,0,.35)"></div><div class="a" style="left:688px;top:722px;width:12px;height:2px;background:#fff"></div><div class="a" style="left:693px;top:717px;width:2px;height:12px;background:#fff"></div><div class="a" style="left:725px;top:704px;width:231px;height:38px;border:1px solid #7e7e7e;border-radius:5px"></div><div class="t" style="left:734px;top:699px;padding:0 3px;font-size:11px;color:#cfcfcf;background:#424242">Count</div><div class="t" style="left:737px;top:718px;font-size:15px;color:#f5f5f5">1</div><div class="a" style="left:0;top:0;width:980px;height:64px;background:#627f8c"></div><div class="t" style="left:16px;top:21px;font-size:21px;color:#ffffff">Create a new Crafting Recipe</div><div class="a" style="left:766px;top:24px;width:34px;height:14px;border-radius:7px;background:#b0bec5"></div><div class="a" style="left:764px;top:20px;width:20px;height:20px;border-radius:10px;background:#bdbdbd;box-shadow:0 1px 3px rgba(0,0,0,.4)"></div><div class="t" style="left:809px;top:23px;font-size:16px;color:#ffffff">Show popover</div><svg class="a" style="left:936px;top:25px" width="16" height="16" viewBox="0 0 16 16"><path d="M1.5 1.5 L14.5 14.5 M14.5 1.5 L1.5 14.5" stroke="#fff" stroke-width="2.2"/></svg><div class="a" style="left:969px;top:450px;width:9px;height:313px;border-radius:5px;background:#363636"></div><div class="a" style="left:0;top:766px;width:980px;height:1px;background:#e0e0e0"></div><div class="a" style="left:815px;top:783px;width:65px;height:36px;border-radius:4px;background:#2196f3;box-shadow:0 2px 3px rgba(0,0,0,.3)"></div><div class="t" style="left:815px;top:794px;width:65px;text-align:center;font-size:14px;color:#fff;font-weight:bold;-webkit-text-stroke:0">Save</div><div class="t" style="left:903px;top:794px;font-size:14px;color:#fff;font-weight:bold;-webkit-text-stroke:0">Cancel</div>
</div></div></body></html>
